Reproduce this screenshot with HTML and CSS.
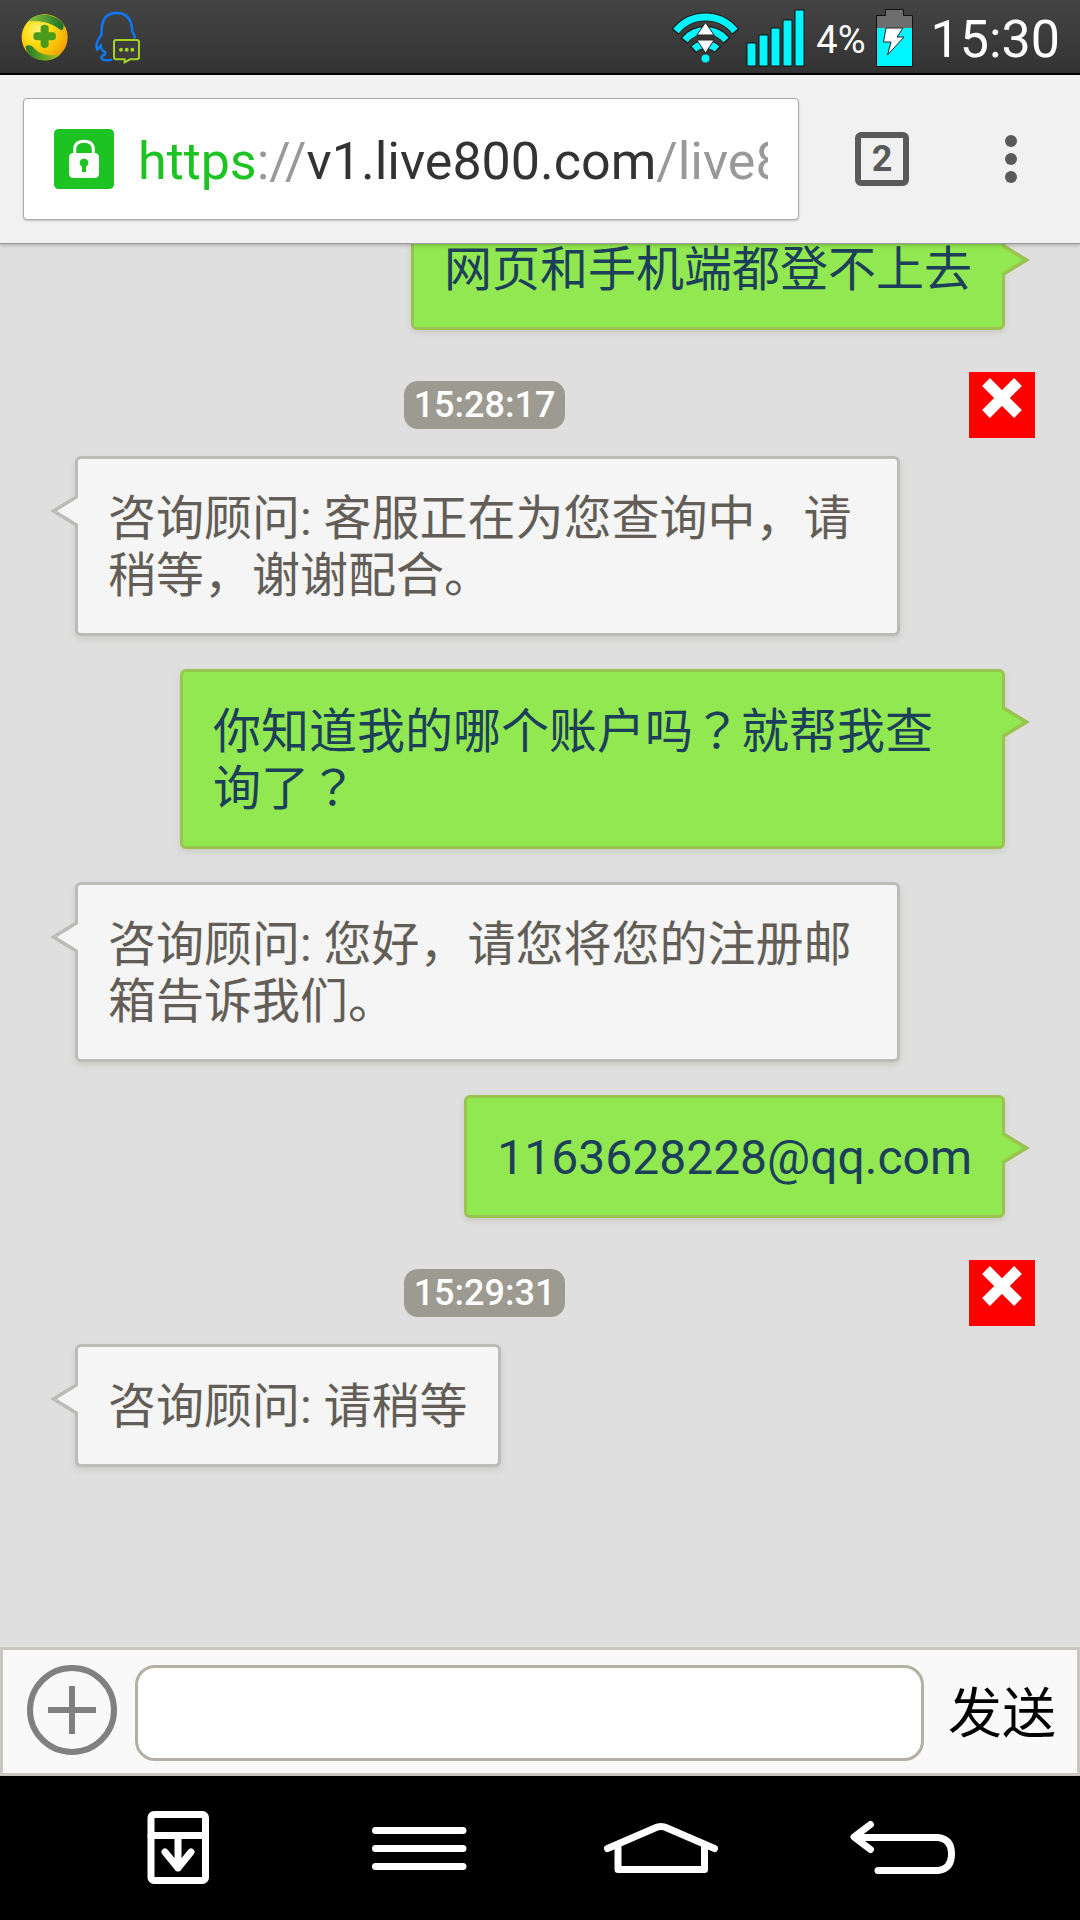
FILE: index.html
```html
<!DOCTYPE html>
<html lang="zh-CN">
<head>
<meta charset="utf-8">
<meta name="viewport" content="width=device-width">
<title>在线客服</title>
<link rel="stylesheet" href="styles.css">
</head>
<body>
<header class="status">
  <div class="status-group status-left">
    <svg width="48" height="49" viewBox="64 40 144 147" aria-hidden="true">
      <defs>
        <radialGradient id="ball" cx="0.35" cy="0.35" r="0.75"><stop offset="0" stop-color="#fff27a"/><stop offset="0.4" stop-color="#ffdc10"/><stop offset="1" stop-color="#f39a00"/></radialGradient>
        <linearGradient id="leaf" x1="0" x2="1"><stop offset="0" stop-color="#8fc63a"/><stop offset="1" stop-color="#17702a"/></linearGradient>
        <linearGradient id="leaf2" x1="0" x2="1"><stop offset="0" stop-color="#1f7a2a"/><stop offset="1" stop-color="#a4c91e"/></linearGradient>
      </defs>
      <circle cx="135" cy="113" r="69" fill="url(#ball)"/>
      <path d="M84 66C104 40 160 34 190 72C194 80 191 90 186 92C168 84 150 60 84 66Z" fill="url(#leaf)"/>
      <path d="M78 140C88 134 98 137 106 149C124 166 150 172 183 162C166 186 108 194 84 158C80 151 77 146 78 140Z" fill="url(#leaf2)"/>
      <path d="M123 83Q124 75 135 75Q146 75 147 83V98H161Q169 100 169 110Q169 120 161 122H147V136Q145 145 135 145Q125 145 123 136V122H109Q101 120 101 110Q101 100 109 98H123Z" fill="#4b9a1c"/>
    </svg>
    <svg width="46" height="53" viewBox="285 36 138 159" aria-hidden="true">
      <path d="M337 182C324 185 310 183 305 179C302 173 307 169 315 166L316 160C309 157 303 150 302 140L292 152C286 140 291 124 304 108C304 62 316 42 350 42C384 42 396 68 397 98Q404 108 405 118" fill="none" stroke="#0a7cff" stroke-width="7"/>
      <path d="M348 123H410Q417 123 417 130V174Q417 181 410 181H390L374 190V181H348Q342 181 342 174V130Q342 123 348 123Z" fill="#3d3d3d" stroke="#a5d322" stroke-width="6"/>
      <g fill="#a5d322"><circle cx="363" cy="152" r="6"/><circle cx="380" cy="152" r="6"/><circle cx="397" cy="152" r="6"/></g>
    </svg>
  </div>
  <div class="status-group">
    <svg width="67" height="52" viewBox="0 0 67 52" aria-hidden="true">
      <g fill="none" stroke="#1c1c1c" stroke-width="9"><path d="M3 20A38 38 0 0 1 64 20M12 29A27 27 0 0 1 55 29M21 38A17 17 0 0 1 46 38"/></g>
      <g fill="none" stroke="#00f6ff" stroke-width="7"><path d="M4 19A38 38 0 0 1 63 19M13 28A27 27 0 0 1 54 28M22 37A17 17 0 0 1 45 37"/></g>
      <circle cx="33.500" cy="46.500" r="4" fill="#00f6ff"/>
      <path d="M24 25.500H43" stroke="#333" stroke-width="4"/>
      <path d="M33.500 10.500L42 23H25ZM25 28H42L33.500 41Z" fill="#fff" stroke="#222" stroke-width="1"/>
    </svg>
    <svg class="signal" width="60" height="58" viewBox="0 0 60 58" aria-hidden="true">
      <g fill="#00f6ff" stroke="#111" stroke-width="1"><path d="M1 34H10V57H1ZM13 26H22V57H13ZM25 19H34V57H25ZM37 11H46V57H37ZM49 1H58V57H49Z"/></g>
    </svg>
    <span class="battery-level">4%</span>
    <svg class="battery" width="37" height="58" viewBox="0 0 37 58" aria-hidden="true">
      <path d="M.5 6.500H9.500V.5H27.500V6.500H36.500V57.500H.5Z" fill="#6e6e6e" stroke="#111"/>
      <path d="M1 19H36V57H1Z" fill="#00f6ff"/>
      <path d="M10 19H27L21 28H28L11.500 46L15 33H7.500Z" fill="#fff" stroke="#222" stroke-width="1"/>
    </svg>
    <time class="clock">15:30</time>
  </div>
</header>

<nav class="toolbar">
  <div class="address">
    <button class="plain lock" type="button" aria-label="网站信息">
      <svg width="60" height="60" viewBox="162 387 180 180">
        <rect x="162" y="387" width="180" height="180" rx="14" fill="#1cc322"/>
        <path d="M224 462V450Q224 424 252 424T280 450V462" fill="none" stroke="#fff" stroke-width="9"/>
        <rect x="207" y="459" width="90" height="75" rx="13" fill="#fff"/>
        <path d="M246 516V500A13 13 0 1 1 258 500V516Z" fill="#1cc322"/>
      </svg>
    </button>
    <a class="url" href="#"><span class="scheme">https</span>://<span class="host">v1.live800.com</span>/live8</a>
  </div>
  <button class="plain tabs" type="button">2</button>
  <button class="plain more" type="button" aria-label="更多"><i></i><i></i><i></i></button>
</nav>

<main class="chat">
  <p class="bubble sent">网页和手机端都登不上去<svg class="tail" width="28" height="34" viewBox="0 0 28 34"><path d="M0 0V34L28 17Z" fill="#9ac44f"/><path d="M0 4V30L21 17Z" fill="#92e850"/></svg></p>
  <div class="stamp">
    <time class="time">15:28:17</time>
    <button class="plain close" type="button" aria-label="关闭"><svg width="42" height="42" viewBox="0 0 42 42"><path d="M5 5L37 37M37 5L5 37" stroke="#fff" stroke-width="11"/></svg></button>
  </div>
  <p class="bubble received">咨询顾问: 客服正在为您查询中，请稍等，谢谢配合。<svg class="tail" width="28" height="34" viewBox="0 0 28 34"><path d="M28 0V34L0 17Z" fill="#bbbbb7"/><path d="M28 4V30L7 17Z" fill="#f5f5f5"/></svg></p>
  <p class="bubble sent">你知道我的哪个账户吗<span class="mark" lang="zh-TW">？</span>就帮我查询了<span class="mark" lang="zh-TW">？</span><svg class="tail" width="28" height="34" viewBox="0 0 28 34"><path d="M0 0V34L28 17Z" fill="#9ac44f"/><path d="M0 4V30L21 17Z" fill="#92e850"/></svg></p>
  <p class="bubble received">咨询顾问: 您好，请您将您的注册邮箱告诉我们。<svg class="tail" width="28" height="34" viewBox="0 0 28 34"><path d="M28 0V34L0 17Z" fill="#bbbbb7"/><path d="M28 4V30L7 17Z" fill="#f5f5f5"/></svg></p>
  <p class="bubble sent">1163628228@qq.com<svg class="tail" width="28" height="34" viewBox="0 0 28 34"><path d="M0 0V34L28 17Z" fill="#9ac44f"/><path d="M0 4V30L21 17Z" fill="#92e850"/></svg></p>
  <div class="stamp">
    <time class="time">15:29:31</time>
    <button class="plain close" type="button" aria-label="关闭"><svg width="42" height="42" viewBox="0 0 42 42"><path d="M5 5L37 37M37 5L5 37" stroke="#fff" stroke-width="11"/></svg></button>
  </div>
  <p class="bubble received">咨询顾问: 请稍等<svg class="tail" width="28" height="34" viewBox="0 0 28 34"><path d="M28 0V34L0 17Z" fill="#bbbbb7"/><path d="M28 4V30L7 17Z" fill="#f5f5f5"/></svg></p>
</main>

<form class="composer">
  <button class="plain add" type="button" aria-label="添加">
    <svg width="90" height="90" viewBox="0 0 90 90"><circle cx="45" cy="45" r="42" fill="none" stroke="#808080" stroke-width="6"/><path d="M45 21V69M21 45H69" stroke="#808080" stroke-width="6"/></svg>
  </button>
  <input class="message" type="text" aria-label="消息">
  <button class="plain send" type="submit">发送</button>
</form>

<footer class="keys">
  <button class="plain key" type="button" aria-label="通知">
    <svg width="64" height="76" viewBox="146 1810 64 76"><g fill="none" stroke="#fff" stroke-width="7" stroke-linecap="round" stroke-linejoin="round"><rect x="151" y="1814.500" width="54.500" height="66" rx="3"/><path d="M151 1835.500H205M178 1836V1868M165 1852L178 1868L191 1852"/></g></svg>
  </button>
  <button class="plain key" type="button" aria-label="菜单">
    <svg width="96" height="46" viewBox="371.500 1825 96 46"><path d="M376 1830.500H463.500M376 1848.500H463.500M376 1866.500H463.500" stroke="#fff" stroke-width="7" stroke-linecap="round"/></svg>
  </button>
  <button class="plain key" type="button" aria-label="主页">
    <svg width="116" height="54" viewBox="603 1821 116 54"><path d="M607.500 1848.500L655 1828Q661 1825 667 1828L714.500 1848.500M618 1847V1869.500H704.500V1847" fill="none" stroke="#fff" stroke-width="7" stroke-linecap="round" stroke-linejoin="round"/></svg>
  </button>
  <button class="plain key" type="button" aria-label="返回">
    <svg width="108" height="56" viewBox="848 1821 108 56"><path d="M870.500 1825.500L854 1838L870.500 1850.500M855 1838.500H938Q951.500 1840 951.500 1855T938 1871.500H878" fill="none" stroke="#fff" stroke-width="7" stroke-linecap="round" stroke-linejoin="round"/></svg>
  </button>
</footer>
</body>
</html>
```
FILE: styles.css
```css
* {
  box-sizing: border-box;
}

body {
  margin: 0;
  height: 100vh;
  display: flex;
  flex-direction: column;
  background: #dfdfdf;
  font-family: Roboto, "Noto Sans CJK SC", sans-serif;
}

svg {
  display: block;
}

.plain {
  margin: 0;
  padding: 0;
  border: 0;
  background: none;
  font: inherit;
  color: inherit;
}

/* status bar */
.status {
  flex: none;
  display: flex;
  justify-content: space-between;
  height: 75px;
  padding: 2px 20px 0 21px;
  border-bottom: 2px solid #000;
  background: linear-gradient(#444, #333);
  color: #fff;
}

.status-group {
  display: flex;
  align-items: center;
}

.status-left {
  gap: 26px;
}

.signal {
  margin-left: 7px;
}

.battery-level {
  margin-left: 10px;
  padding-top: 4px;
  font-size: 38px;
  line-height: 48px;
}

.battery {
  margin-left: 10px;
}

.clock {
  margin-left: 18px;
  padding-top: 4px;
  font-size: 52px;
  line-height: 64px;
}

/* browser toolbar */
.toolbar {
  position: relative;
  z-index: 1;
  flex: none;
  display: flex;
  align-items: center;
  height: 169px;
  padding: 0 63px 0 23px;
  border-bottom: 1px solid #999;
  background: #f1f1f1;
  box-shadow: 0 1px 4px rgba(0, 0, 0, 0.25);
}

.address {
  flex: 1;
  min-width: 0;
  display: flex;
  align-items: center;
  gap: 24px;
  height: 122px;
  padding: 0 30px;
  border: 1px solid #aaa;
  border-radius: 4px;
  background: #fff;
  box-shadow: 0 1px 2px rgba(0, 0, 0, 0.2);
}

.lock {
  flex: none;
}

.url {
  flex: 1;
  min-width: 0;
  padding-top: 5px;
  overflow: hidden;
  white-space: nowrap;
  color: #999;
  font-size: 52px;
  line-height: 72px;
  text-decoration: none;
}

.scheme {
  color: #1cc322;
}

.host {
  color: #333;
}

.tabs {
  width: 54px;
  height: 54px;
  margin-left: 56px;
  border: 6px solid #5a5a5a;
  border-radius: 6px;
  color: #5a5a5a;
  font-size: 36px;
  font-weight: 700;
  line-height: 42px;
}

.more {
  display: grid;
  gap: 6px;
  margin-left: 96px;
}

.more i {
  width: 12px;
  height: 12px;
  border-radius: 50%;
  background: #5a5a5a;
}

/* conversation, pinned to its newest message */
.chat {
  flex: 1;
  min-height: 0;
  display: flex;
  flex-direction: column;
  justify-content: flex-end;
  gap: 33px;
  padding: 0 75px 180px;
  overflow: hidden;
}

.bubble {
  position: relative;
  flex: none;
  max-width: 825px;
  margin: 0;
  padding: 31px 30px 29px;
  border: 3px solid;
  border-radius: 6px;
  font-size: 48px;
  line-height: 57px;
  box-shadow: 0 3px 6px rgba(120, 120, 90, 0.2);
}

.received {
  align-self: flex-start;
  border-color: #bbbbb7;
  background: #f5f5f5;
  color: #625e57;
}

.sent {
  align-self: flex-end;
  border-color: #9ac44f;
  background: #92e850;
  color: #1c405a;
}

.mark {
  font-family: "Noto Sans CJK TC", sans-serif;
  line-height: 1;
}

.tail {
  position: absolute;
}

.received .tail {
  top: 35px;
  right: 100%;
}

.sent .tail {
  top: 33px;
  left: 100%;
}

.stamp {
  flex: none;
  display: grid;
  grid-template-columns: 1fr 66px;
  align-items: center;
  margin: 9px -30px -15px -75px;
}

.time {
  justify-self: center;
  padding: 0 10px;
  border-radius: 14px;
  background: #9d9a92;
  color: #fff;
  font-size: 36px;
  font-weight: 500;
  line-height: 48px;
}

.close {
  display: flex;
  justify-content: center;
  height: 66px;
  padding-top: 5px;
  background: #f00;
}

/* message box */
.composer {
  flex: none;
  display: flex;
  align-items: flex-start;
  gap: 18px;
  padding: 15px 21px 12px 24px;
  border: 3px solid #c9c7c0;
  background: #f9f9f9;
}

.message {
  flex: 1;
  min-width: 0;
  height: 96px;
  padding: 0 18px;
  border: 3px solid #b5b0a5;
  border-radius: 20px;
  background: #fff;
  font: inherit;
  font-size: 48px;
}

.send {
  margin-left: 6px;
  padding-top: 3px;
  color: #000;
  font-size: 54px;
  line-height: 93px;
}

/* system keys */
.keys {
  flex: none;
  display: grid;
  grid-template-columns: repeat(4, 1fr);
  height: 144px;
  padding: 0 57px;
  background: #000;
}

.key {
  display: grid;
  place-items: center;
}
```
